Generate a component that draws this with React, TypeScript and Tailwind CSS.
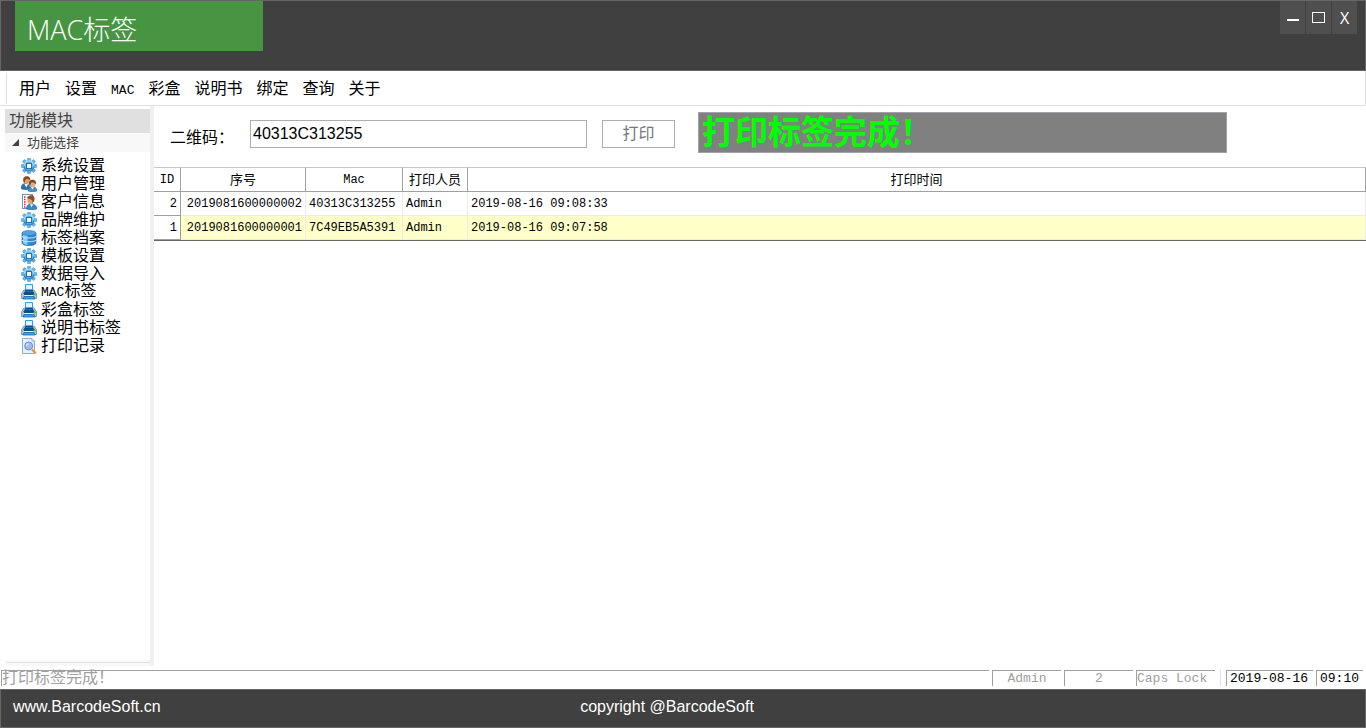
import { useState, type ReactNode } from 'react'

type IconKind = 'gear' | 'users' | 'contact' | 'database' | 'printer' | 'search'

interface Module {
  icon: IconKind
  latin?: string
  label: string
}

interface PrintRecord {
  id: number
  serial: string
  mac: string
  operator: string
  printedAt: string
}

const MENUS = ['用户', '设置', 'MAC', '彩盒', '说明书', '绑定', '查询', '关于']

const MODULES: Module[] = [
  { icon: 'gear', label: '系统设置' },
  { icon: 'users', label: '用户管理' },
  { icon: 'contact', label: '客户信息' },
  { icon: 'gear', label: '品牌维护' },
  { icon: 'database', label: '标签档案' },
  { icon: 'gear', label: '模板设置' },
  { icon: 'gear', label: '数据导入' },
  { icon: 'printer', latin: 'MAC', label: '标签' },
  { icon: 'printer', label: '彩盒标签' },
  { icon: 'printer', label: '说明书标签' },
  { icon: 'search', label: '打印记录' },
]

const RECORDS: PrintRecord[] = [
  { id: 2, serial: '2019081600000002', mac: '40313C313255', operator: 'Admin', printedAt: '2019-08-16 09:08:33' },
  { id: 1, serial: '2019081600000001', mac: '7C49EB5A5391', operator: 'Admin', printedAt: '2019-08-16 09:07:58' },
]

const TEETH = [0, 45, 90, 135, 180, 225, 270, 315]

function GearIcon() {
  return (
    <>
      {TEETH.map((angle) => (
        <path key={angle} d="M6.300 3.500 6.700.2h2.600l.4 3.300z" fill="#63b7f0" stroke="#2f86cc" strokeWidth=".5" transform={`rotate(${angle} 8 8)`} />
      ))}
      <circle cx="8" cy="8" r="5.600" fill="#5ab4f0" />
      <path d="M3.500 7.500a4.500 4.500 0 0 1 9 0" fill="none" stroke="#9fd9fb" strokeWidth="1.400" />
      <path d="M13 9a5.200 5.200 0 0 1-10 0" fill="none" stroke="#2f86cc" strokeWidth="1.200" />
      <rect x="5.500" y="5.500" width="5" height="5" fill="#fff" stroke="#2470b5" />
    </>
  )
}

function UsersIcon() {
  return (
    <>
      <path d="M0 12.500C0 9.500 1.500 7.500 4.500 7.500s4.500 2 4.500 5c-2 1.500-7 1.500-9 0z" fill="#2674b8" stroke="#1b4f86" strokeWidth=".5" />
      <path d="M3.500 8l1.800 3.500L7 8z" fill="#fff" />
      <ellipse cx="5.800" cy="4.800" rx="2.800" ry="3.300" fill="#e3a068" />
      <path d="M2.500 6C1.500 2.500 2.800.3 5.600.3c2.700 0 4.200 1.600 3.500 4.300C8 3 6 2.700 4.800 3.200 4 4 4 5.500 3.500 7z" fill="#8a4b1c" />
      <path d="M7 15c0-3 1.300-4.300 4.200-4.300S15.900 12 15.900 15c-2 1-6.900 1-8.900 0z" fill="#3c93da" stroke="#1b568f" strokeWidth=".5" />
      <path d="m10 11 1.500 2.500L13 11z" fill="#fff" />
      <ellipse cx="11.500" cy="8.200" rx="2.700" ry="3" fill="#e9a973" />
      <path d="M8.300 9c-1-3 .4-5.200 3.100-5.200s4.200 1.800 3.500 4.700c-1-1.500-2.700-2.500-4-2.200C10 7 9.500 8 9 10z" fill="#7c481f" />
    </>
  )
}

function ContactIcon() {
  return (
    <>
      <rect x="1.500" y=".5" width="10" height="14" fill="#fff" stroke="#7d94b5" />
      <path d="M3 3h1.500M3 5.500h1.500M3 8h1.500M3 10.500h1.500M3 13h1.500" stroke="#e02020" strokeWidth="1.500" />
      <path d="M5.500 3H7M5.500 5.500H6" stroke="#b8c8dc" />
      <path d="M5.500 15c0-3.200 1.600-5 4.800-5s5.400 1.800 5.400 5c-2 1-8.200 1-10.200 0z" fill="#3289d2" stroke="#1c5c9b" strokeWidth=".6" />
      <path d="m9 10.200 1.500 3 1.700-3z" fill="#fff" />
      <ellipse cx="9.300" cy="6.500" rx="2.900" ry="3.500" fill="#e5a06c" />
      <path d="M6.200 4.800c.2-2.300 1.800-3.600 4-3.600 2.800 0 4.200 2.500 2.800 6.300l-1.500 1.300c.1-2.300-.8-4-5.300-4z" fill="#8c4e22" />
    </>
  )
}

function DatabaseIcon() {
  return (
    <>
      <path d="M1 3v10c0 1.500 3 2.600 7 2.600s7-1.100 7-2.600V3z" fill="#2f86cf" stroke="#1f63a5" strokeWidth=".6" />
      <path d="M2 4v9.200c.8.8 2.500 1.400 4.500 1.600V5z" fill="#8fcdf6" />
      <path d="M1 6.500c1.500 2 12.500 2 14 0M1 10.200c1.500 2 12.500 2 14 0" fill="none" stroke="#c8e8fc" />
      <ellipse cx="8" cy="3" rx="7" ry="2.500" fill="#4ba4e4" stroke="#2677bd" strokeWidth=".6" />
    </>
  )
}

function PrinterIcon() {
  return (
    <>
      <path d="M.5 14.500V9.800L3 6h10l2.500 3.800v4.700z" fill="#b9c4cf" stroke="#76838f" strokeWidth=".8" />
      <path d="M4.500 7V.5h7V7z" fill="#e3f3ff" stroke="#2c9df0" />
      <path d="M2.500 9.500 5 5.500h6l2.500 4-.5 1.500H3z" fill="#0a4d90" />
      <path d="M4.500 7.500h7" stroke="#1474c2" />
      <path d="M3 12.500h10l1 2.500H2z" fill="#35a5f2" stroke="#1668b0" strokeWidth=".8" />
      <path d="M3.500 11.500h8.500" stroke="#fff" />
      <path d="M12.500 10.500h2.500" stroke="#2be02b" strokeWidth="1.500" />
    </>
  )
}

function SearchIcon() {
  return (
    <>
      <path d="M1.500.5H11L13.500 3v12.500h-12z" fill="#e9f1fc" stroke="#8fabd8" />
      <path d="M11 .5V3h2.500" fill="#fff" stroke="#8fabd8" />
      <path d="m11 11.500 3.800 3.800" stroke="#eb9526" strokeWidth="2.200" />
      <circle cx="7.700" cy="8" r="4" fill="#9dbcf0" stroke="#6f8fcd" />
      <path d="M5.500 8a2.200 2.200 0 0 1 2.200-2.200" fill="none" stroke="#dce9fc" strokeWidth="1.300" />
    </>
  )
}

const ICONS: Record<IconKind, () => ReactNode> = {
  gear: GearIcon,
  users: UsersIcon,
  contact: ContactIcon,
  database: DatabaseIcon,
  printer: PrinterIcon,
  search: SearchIcon,
}

function ModuleIcon({ kind }: { kind: IconKind }) {
  const Shape = ICONS[kind]
  return (
    <svg viewBox="0 0 16 16" className="size-4 shrink-0" aria-hidden="true">
      <Shape />
    </svg>
  )
}

function TitleBar() {
  return (
    <header className="flex h-[71px] items-start justify-between border border-[#666666] bg-[#404040] pr-2 pl-3.5 text-white">
      <h1 className="flex h-[50px] w-[248px] items-center bg-[#479543] pt-2 pl-3 font-['Open_Sans','Noto_Sans_CJK_SC',sans-serif] text-[27px] leading-10 font-light">
        MAC标签
      </h1>
      <div className="flex gap-px">
        <button aria-label="最小化" className="flex h-[33px] w-[25px] items-center justify-center bg-[#4f4f4f]">
          <svg viewBox="0 0 12 12" className="size-3" shapeRendering="crispEdges">
            <path d="M0 7h12v2H0z" fill="#fff" />
          </svg>
        </button>
        <button aria-label="最大化" className="flex h-[33px] w-[25px] items-center justify-center bg-[#4f4f4f]">
          <svg viewBox="0 0 13 11" className="h-[11px] w-[13px]" shapeRendering="crispEdges">
            <path d="M.5.5h12v10H.5z" fill="none" stroke="#fff" />
          </svg>
        </button>
        <button aria-label="关闭" className="h-[33px] w-[25px] bg-[#4f4f4f] text-center font-['Open_Sans',sans-serif] text-base leading-8">
          X
        </button>
      </div>
    </header>
  )
}

function MenuBar() {
  return (
    <nav className="flex h-[35px] border-r border-b border-[#e0e0e0] pt-0.5 pl-1.5">
      <div className="flex h-[31px] items-baseline gap-3.5 border-l border-[#e0e0e0] pl-3 leading-[31px]">
        {MENUS.map((name) =>
          name === 'MAC' ? (
            <button key={name} className="font-['Liberation_Mono',monospace] text-[13px]">{name}</button>
          ) : (
            <button key={name} className="text-base leading-[31px]">{name}</button>
          )
        )}
      </div>
    </nav>
  )
}

function Sidebar() {
  const [open, setOpen] = useState(true)

  return (
    <aside className="flex w-[154px] shrink-0 flex-col border-r-4 border-[#f0f0f0] pt-[3px] pl-[5px]">
      <h2 className="h-6 bg-[#e0e0e0] pl-1 text-base leading-6 text-[#444444]">功能模块</h2>
      <button
        aria-expanded={open}
        onClick={() => setOpen(!open)}
        className="flex h-[19px] items-center gap-2 bg-[#f8f8f8] pl-[7px] text-[13px] text-[#444444]"
      >
        <svg viewBox="0 0 7 7" className="size-[7px]" aria-hidden="true">
          <path d="M7 0v7H0z" fill="#444" />
        </svg>
        功能选择
      </button>
      {open && (
        <ul className="pt-[5px] pl-4">
          {MODULES.map((m) => (
            <li key={`${m.latin ?? ''}${m.label}`}>
              <button className="flex h-[18px] items-center gap-1 text-base leading-[18px]">
                <ModuleIcon kind={m.icon} />
                <span>
                  {m.latin && <span className="font-['Liberation_Mono',monospace] text-[13px]">{m.latin}</span>}
                  {m.label}
                </span>
              </button>
            </li>
          ))}
        </ul>
      )}
      <div className="mt-auto h-[6px] border-t-2 border-[#f8f8f8] bg-[#f8f8f8]">
        <div className="ml-0.5 h-px bg-[#e0e0e0]" />
      </div>
    </aside>
  )
}

function PrintForm() {
  const [code, setCode] = useState('40313C313255')

  return (
    <form className="flex h-[61px] items-start pt-1.5 pl-4" onSubmit={(e) => e.preventDefault()}>
      <label htmlFor="code" className="mt-3.5 w-20 text-base leading-6">二维码：</label>
      <input
        id="code"
        value={code}
        onChange={(e) => setCode(e.target.value)}
        className="mt-2 h-7 w-[337px] border border-[#abadb3] px-0.5 text-base leading-6 outline-none"
      />
      <button className="mt-2 ml-[15px] h-7 w-[73px] border border-[#adadb0] text-base leading-6 text-[#777777]">
        打印
      </button>
      <output className="ml-[23px] h-[41px] w-[529px] border border-[#a3a1a8] bg-[#808080] pl-[3px] text-[33px] leading-[39px] font-bold text-[#00ff00]">
        打印标签完成！
      </output>
    </form>
  )
}

function RecordTable() {
  return (
    <table className="w-full table-fixed border-separate border-spacing-0 border-b border-[#66666a] text-[13px] leading-5">
      <colgroup>
        <col className="w-[27px]" />
        <col className="w-[125px]" />
        <col className="w-[97px]" />
        <col className="w-[65px]" />
        <col />
      </colgroup>
      <thead>
        <tr className="h-[25px] *:border-t *:border-r *:border-b *:border-t-[#c8c8c8] *:border-r-[#a0a0a0] *:border-b-[#a0a0a0] *:p-0 *:text-center *:font-normal">
          <th className="font-['Liberation_Mono',monospace] text-xs">ID</th>
          <th>序号</th>
          <th className="font-['Liberation_Mono',monospace] text-xs">Mac</th>
          <th>打印人员</th>
          <th>打印时间</th>
        </tr>
      </thead>
      <tbody className="font-['Liberation_Mono',monospace] text-xs">
        {RECORDS.map((r, i) => (
          <tr
            key={r.id}
            className={`h-6 *:border-r *:border-b *:border-[#ececec] *:p-0 *:px-[3px] ${i % 2 === 1 ? 'bg-[#ffffc8]' : 'bg-white'}`}
          >
            <td className="border-[#a0a0a0]! bg-white text-right">{r.id}</td>
            <td className="text-right">{r.serial}</td>
            <td>{r.mac}</td>
            <td>{r.operator}</td>
            <td>{r.printedAt}</td>
          </tr>
        ))}
      </tbody>
    </table>
  )
}

function StatusBar() {
  return (
    <div className="mt-1 flex h-[19px] gap-[3px] pr-[3px] pl-px font-['Liberation_Mono','Noto_Sans_CJK_SC',monospace] text-[13px] leading-4 text-[#a0a0a0] *:h-4 *:border-[#a0a0a0]">
      <div className="flex-1 border-t border-l text-base leading-4">打印标签完成！</div>
      <div className="w-[69px] border-t border-l text-center">Admin</div>
      <div className="w-[69px] border-t border-l text-center">2</div>
      <div className="w-[79px] border-t border-l">Caps Lock</div>
      <div className="mx-0.5 w-px border-l border-[#e0e0e0]!" />
      <div className="w-[87px] border-t border-l pl-[3px] text-black">2019-08-16</div>
      <div className="w-[47px] border-t border-l pl-[3px] text-black">09:10</div>
    </div>
  )
}

export default function App() {
  return (
    <div className="flex min-h-screen flex-col bg-white font-['Liberation_Sans','Noto_Sans_CJK_SC',sans-serif] text-black">
      <TitleBar />
      <MenuBar />
      <div className="flex flex-1">
        <Sidebar />
        <main className="min-w-0 flex-1">
          <PrintForm />
          <RecordTable />
        </main>
      </div>
      <StatusBar />
      <footer className="grid h-[39px] grid-cols-[1fr_auto_1fr] border border-[#666666] bg-[#404040] px-3 text-base leading-[34px] text-white">
        <a href="#site" className="justify-self-start">www.BarcodeSoft.cn</a>
        <span className="pr-8">copyright @BarcodeSoft</span>
      </footer>
    </div>
  )
}
